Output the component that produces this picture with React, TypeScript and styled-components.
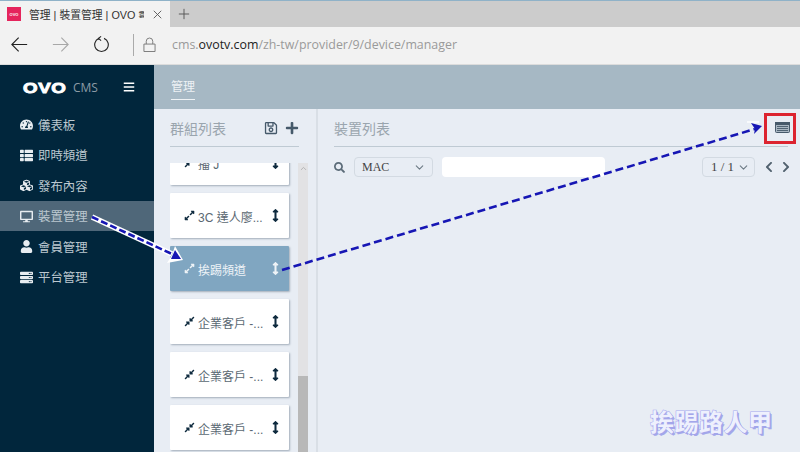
import React from 'react';
import styled, { createGlobalStyle } from 'styled-components';
import {
  FaTachometerAlt,
  FaThList,
  FaCubes,
  FaDesktop,
  FaUser,
  FaServer,
  FaRegSave,
  FaPlus,
  FaExpandAlt,
  FaCompressAlt,
  FaArrowsAltV,
  FaSearch,
  FaChevronLeft,
  FaChevronRight,
  FaBars,
} from 'react-icons/fa';
import { FiChevronDown, FiChevronUp } from 'react-icons/fi';

const cjk = `"Liberation Sans", "Noto Sans CJK TC", sans-serif`;

const menu = [
  { label: '儀表板', icon: <FaTachometerAlt /> },
  { label: '即時頻道', icon: <FaThList /> },
  { label: '發布內容', icon: <FaCubes /> },
  { label: '裝置管理', icon: <FaDesktop />, active: true },
  { label: '會員管理', icon: <FaUser /> },
  { label: '平台管理', icon: <FaServer /> },
];

const groups = [
  { label: '播 J', collapsed: true },
  { label: '3C 達人廖...' },
  { label: '挨踢頻道', selected: true },
  { label: '企業客戶 -...', collapsed: true },
  { label: '企業客戶 -...', collapsed: true },
  { label: '企業客戶 -...', collapsed: true },
];

const App = () => {
  return (
    <Screen>
      <GlobalStyle />
      <TabStrip>
        <Tab>
          <Favicon>OVO</Favicon>
          <TabTitle>
            管理 | 裝置管理 | OVO <TinyGlyph>雲</TinyGlyph>
          </TabTitle>
          <TabClose viewBox="0 0 12 12">
            <path d="M1 1 L11 11 M11 1 L1 11" />
          </TabClose>
        </Tab>
        <NewTab viewBox="0 0 14 14">
          <path d="M7 1 V13 M1 7 H13" />
        </NewTab>
      </TabStrip>
      <AddressBar>
        <NavIcon viewBox="0 0 20 20">
          <path d="M1 10 H19 M9 2 L1 10 L9 18" />
        </NavIcon>
        <NavIcon $dim viewBox="0 0 20 20">
          <path d="M1 10 H19 M11 2 L19 10 L11 18" />
        </NavIcon>
        <NavIcon viewBox="0 0 20 20">
          <path d="M7 2.8 A8 8 0 1 0 13 2.8 M9.5 0.5 L6.5 2.8 L9.5 5.5" />
        </NavIcon>
        <AddressDivider />
        <LockIcon viewBox="0 0 14 16">
          <path d="M1 7 H13 V15 H1 Z M3.5 7 V4 A3.5 3.5 0 0 1 10.5 4 V7" />
        </LockIcon>
        <Url>
          cms.<strong>ovotv.com</strong>/zh-tw/provider/9/device/manager
        </Url>
      </AddressBar>
      <Body>
        <Sidebar>
          <Brand>
            <Logo>OVO</Logo>
            <Cms>CMS</Cms>
            <Burger>
              <FaBars />
            </Burger>
          </Brand>
          <Menu>
            {menu.map((m) => (
              <MenuItem key={m.label} $active={m.active}>
                <MenuIcon>{m.icon}</MenuIcon>
                {m.label}
              </MenuItem>
            ))}
          </Menu>
        </Sidebar>
        <Main>
          <TopBar>
            <TopTab>管理</TopTab>
          </TopBar>
          <Columns>
            <GroupColumn>
              <ColumnHeader>
                <ColumnTitle>群組列表</ColumnTitle>
                <HeaderTools>
                  <FaRegSave />
                  <FaPlus />
                </HeaderTools>
              </ColumnHeader>
              <GroupBody>
                <GroupClip>
                  <GroupList>
                    {groups.map((g, i) => (
                      <GroupCard key={i} $selected={g.selected}>
                        <CardIcon $selected={g.selected}>
                          {g.collapsed ? <FaCompressAlt /> : <FaExpandAlt />}
                        </CardIcon>
                        <CardLabel>{g.label}</CardLabel>
                        <CardHandle $selected={g.selected}>
                          <FaArrowsAltV />
                        </CardHandle>
                      </GroupCard>
                    ))}
                  </GroupList>
                </GroupClip>
                <Scrollbar>
                  <FiChevronUp />
                  <ScrollThumb />
                </Scrollbar>
              </GroupBody>
            </GroupColumn>
            <DeviceColumn>
              <DeviceHeader>
                <ColumnTitle>裝置列表</ColumnTitle>
                <TableIcon viewBox="0 0 15 11">
                  <rect x="0.5" y="0.5" width="14" height="10" rx="1" fill="#a9b6c2" stroke="#46596a" />
                  <rect x="0" y="0" width="15" height="3" fill="#46596a" />
                  <path d="M2 4.5 H13 M2 6.5 H13 M2 8.5 H13" stroke="#46596a" strokeWidth="0.9" />
                </TableIcon>
              </DeviceHeader>
              <FilterRow>
                <SearchIcon>
                  <FaSearch />
                </SearchIcon>
                <FieldSelect>
                  MAC
                  <FiChevronDown />
                </FieldSelect>
                <SearchInput />
                <Pager>
                  <PageSelect>
                    1 / 1
                    <FiChevronDown />
                  </PageSelect>
                  <PageArrows>
                    <FaChevronLeft />
                    <FaChevronRight />
                  </PageArrows>
                </Pager>
              </FilterRow>
            </DeviceColumn>
          </Columns>
        </Main>
      </Body>
      <Callout />
      <Arrows viewBox="0 0 800 452">
        <path d="M92 217 L172 254" stroke="#fff" strokeWidth="5.5" fill="none" />
        <path d="M92 217 L172 254" stroke="#1616b4" strokeWidth="2.6" strokeDasharray="7 3" fill="none" />
        <path d="M175 246 L183 260 L167 263 L172 255 Z" fill="#fff" />
        <path d="M175 250 L181 259 L171 259 Z" fill="#1616b4" />
        <path d="M282 270 L755 129" stroke="#1616b4" strokeWidth="2.6" strokeDasharray="8 4" fill="none" />
        <path d="M751 123 L762 126 L754 134 L755 129 Z" fill="#1616b4" />
        <path d="M747 122 L759 122" stroke="#fff" strokeWidth="1.4" fill="none" />
      </Arrows>
      <Watermark>挨踢路人甲</Watermark>
    </Screen>
  );
};

const GlobalStyle = createGlobalStyle`
  html, body {
    margin: 0;
    padding: 0;
    background: #e8edf4;
  }
  * {
    box-sizing: border-box;
  }
`;

const Screen = styled.div`
  position: relative;
  display: flex;
  flex-direction: column;
  width: 800px;
  height: 452px;
  overflow: hidden;
  font-family: ${cjk};
`;

const TabStrip = styled.div`
  display: flex;
  align-items: stretch;
  height: 27px;
  flex: none;
  background: #cccccc;
  border-top: 1px solid #8fb2c8;
`;

const Tab = styled.div`
  display: flex;
  align-items: center;
  width: 170px;
  padding-left: 7px;
  background: #f2f2f2;
`;

const Favicon = styled.div`
  display: flex;
  align-items: center;
  justify-content: center;
  width: 14px;
  height: 14px;
  margin-right: 8px;
  flex: none;
  background: #e5245c;
  color: #fff;
  font-size: 4px;
  font-weight: 700;
`;

const TabTitle = styled.div`
  width: 115px;
  overflow: hidden;
  white-space: nowrap;
  font-size: 10.8px;
  color: #333;
`;

const TinyGlyph = styled.span`
  font-size: 7px;
  vertical-align: 2px;
`;

const TabClose = styled.svg`
  width: 9px;
  height: 9px;
  margin-left: 9px;
  fill: none;
  stroke: #555;
  stroke-width: 1.2;
`;

const NewTab = styled.svg`
  align-self: center;
  width: 12px;
  height: 12px;
  margin-left: 8px;
  fill: none;
  stroke: #555;
  stroke-width: 1.1;
`;

const AddressBar = styled.div`
  display: flex;
  align-items: center;
  height: 38px;
  flex: none;
  padding: 0 0 2px 11px;
  background: #f2f2f2;
  border-bottom: 1px solid #dcdcdc;
`;

const NavIcon = styled.svg<{ $dim?: boolean }>`
  width: 17px;
  height: 17px;
  margin-right: 24px;
  fill: none;
  stroke: ${(p) => (p.$dim ? '#a8a8a8' : '#222')};
  stroke-width: 1.3;
`;

const AddressDivider = styled.div`
  width: 1px;
  height: 22px;
  margin: 0 9px 0 -1px;
  background: #aaa;
`;

const LockIcon = styled.svg`
  width: 13px;
  height: 16px;
  margin-right: 16px;
  fill: none;
  stroke: #777;
  stroke-width: 1;
`;

const Url = styled.div`
  font-size: 12.4px;
  font-family: "Open Sans", "Liberation Sans", sans-serif;
  color: #9a9a9a;
  white-space: nowrap;

  strong {
    font-weight: 400;
    color: #222;
  }
`;

const Body = styled.div`
  display: flex;
  flex: 1;
  min-height: 0;
`;

const Sidebar = styled.div`
  width: 154px;
  flex: none;
  background: #01263c;
`;

const Brand = styled.div`
  display: flex;
  align-items: center;
  height: 44px;
  padding: 0 0 0 23px;
  color: #fff;
`;

const Logo = styled.div`
  width: 50px;
  font-family: "Liberation Sans", sans-serif;
  font-weight: 700;
  font-size: 15px;
  letter-spacing: 0.5px;
  transform: scaleX(1.25);
  transform-origin: left center;
  -webkit-text-stroke: 0.9px #fff;
`;

const Cms = styled.div`
  width: 50px;
  font-size: 12px;
  color: #8c9ba6;
  font-family: "Open Sans", sans-serif;
`;

const Burger = styled.div`
  display: flex;
  font-size: 12px;
`;

const Menu = styled.div`
  display: flex;
  flex-direction: column;
`;

const MenuItem = styled.div<{ $active?: boolean }>`
  display: flex;
  align-items: center;
  height: 30.5px;
  padding: 1px 0 0 19px;
  font-size: 12.4px;
  color: #bcc8d0;
  background: ${(p) => (p.$active ? '#4f6779' : 'transparent')};
`;

const MenuIcon = styled.span`
  display: flex;
  justify-content: center;
  width: 14px;
  margin-right: 5px;
  font-size: 13px;
  color: #e8edf1;
`;

const Main = styled.div`
  display: flex;
  flex: 1;
  flex-direction: column;
  min-width: 0;
  background: #e8edf4;
`;

const TopBar = styled.div`
  display: flex;
  height: 44px;
  flex: none;
  padding-left: 17px;
  background: #a6b8c4;
`;

const TopTab = styled.div`
  height: 35px;
  padding-top: 13px;
  font-size: 12px;
  line-height: 18px;
  color: #eef2f5;
  border-bottom: 1px solid #eef2f5;
`;

const Columns = styled.div`
  display: flex;
  flex: 1;
  min-height: 0;
`;

const GroupColumn = styled.div`
  display: flex;
  flex-direction: column;
  width: 164px;
  flex: none;
  padding-left: 16px;
  border-right: 2px solid #d9dfe6;
`;

const ColumnHeader = styled.div`
  display: flex;
  align-items: center;
  justify-content: space-between;
  width: 129px;
  height: 38px;
  flex: none;
  border-bottom: 1px solid #bfcad3;
`;

const ColumnTitle = styled.div`
  font-size: 14px;
  color: #9aa5ae;
`;

const HeaderTools = styled.div`
  display: flex;
  align-items: center;
  gap: 7px;
  font-size: 14px;
  color: #45596a;
`;

const GroupBody = styled.div`
  display: flex;
  flex: 1;
  min-height: 0;
  margin-top: 16px;
`;

const GroupClip = styled.div`
  width: 128px;
  flex: none;
  overflow: hidden;
`;

const GroupList = styled.div`
  display: flex;
  flex-direction: column;
  gap: 8px;
  margin-top: -23px;
`;

const GroupCard = styled.div<{ $selected?: boolean }>`
  display: flex;
  align-items: center;
  width: 119px;
  height: 45px;
  flex: none;
  padding: 0 7px 0 14px;
  font-size: 12px;
  border-radius: 1px;
  box-shadow: 1px 1px 2px rgba(60, 80, 100, 0.4);
  background: ${(p) => (p.$selected ? '#80a6c1' : '#fff')};
  color: ${(p) => (p.$selected ? '#eef3f7' : '#5a6872')};
`;

const CardIcon = styled.span<{ $selected?: boolean }>`
  display: flex;
  width: 14px;
  font-size: 11px;
  color: ${(p) => (p.$selected ? '#eef3f7' : '#0e2a3e')};
`;

const CardLabel = styled.div`
  flex: 1;
  padding-top: 2px;
  white-space: nowrap;
  overflow: hidden;
`;

const CardHandle = styled.span<{ $selected?: boolean }>`
  display: flex;
  font-size: 13px;
  color: ${(p) => (p.$selected ? '#eef3f7' : '#0e2a3e')};
`;

const Scrollbar = styled.div`
  position: relative;
  display: flex;
  justify-content: center;
  width: 10px;
  flex: none;
  padding-top: 1px;
  font-size: 9px;
  color: #a5a5a5;
  background: #e2e2e4;
`;

const ScrollThumb = styled.div`
  position: absolute;
  top: 213px;
  bottom: 0;
  left: 0;
  right: 0;
  background: #b8b8b8;
`;

const DeviceColumn = styled.div`
  display: flex;
  flex: 1;
  flex-direction: column;
  min-width: 0;
  padding: 0 12px 0 16px;
`;

const DeviceHeader = styled(ColumnHeader)`
  width: auto;
`;

const TableIcon = styled.svg`
  width: 15px;
  height: 11px;
  margin-right: -2px;
`;

const FilterRow = styled.div`
  display: flex;
  align-items: center;
  height: 20px;
  margin-top: 10px;
`;

const SearchIcon = styled.span`
  display: flex;
  width: 20px;
  font-size: 11px;
  color: #5b6b78;
`;

const FieldSelect = styled.div`
  display: flex;
  align-items: center;
  justify-content: space-between;
  width: 79px;
  height: 20px;
  padding: 0 6px 0 7px;
  font-family: "Liberation Serif", serif;
  font-size: 12px;
  color: #444;
  border: 1px solid #d3dae2;
  border-radius: 4px;

  svg {
    color: #6d7a85;
    font-size: 13px;
  }
`;

const SearchInput = styled.div`
  width: 163px;
  height: 20px;
  margin-left: 9px;
  background: #fff;
  border-radius: 4px;
`;

const Pager = styled.div`
  display: flex;
  align-items: center;
  margin-left: auto;
  margin-right: -4px;
`;

const PageSelect = styled(FieldSelect)`
  width: 53px;
  padding: 0 4px 0 8px;
  font-size: 13px;
`;

const PageArrows = styled.div`
  display: flex;
  gap: 5px;
  margin-left: 8px;
  font-size: 12px;
  color: #51616e;
`;

const Callout = styled.div`
  position: absolute;
  left: 764px;
  top: 113px;
  width: 32px;
  height: 31px;
  border: 3px solid #dc2430;
`;

const Arrows = styled.svg`
  position: absolute;
  left: 0;
  top: 0;
  width: 800px;
  height: 452px;
  pointer-events: none;
`;

const Watermark = styled.div`
  position: absolute;
  left: 650px;
  top: 407px;
  font-size: 24px;
  line-height: 28px;
  letter-spacing: 0.5px;
  font-weight: 700;
  font-family: "Noto Sans CJK TC", sans-serif;
  color: #eef0fd;
  -webkit-text-stroke: 1.2px #a9acf0;
  paint-order: stroke fill;
  text-shadow: 1px 1px 0 #a3a6ea, 2px 2px 0 #a3a6ea;
`;

export default App;
